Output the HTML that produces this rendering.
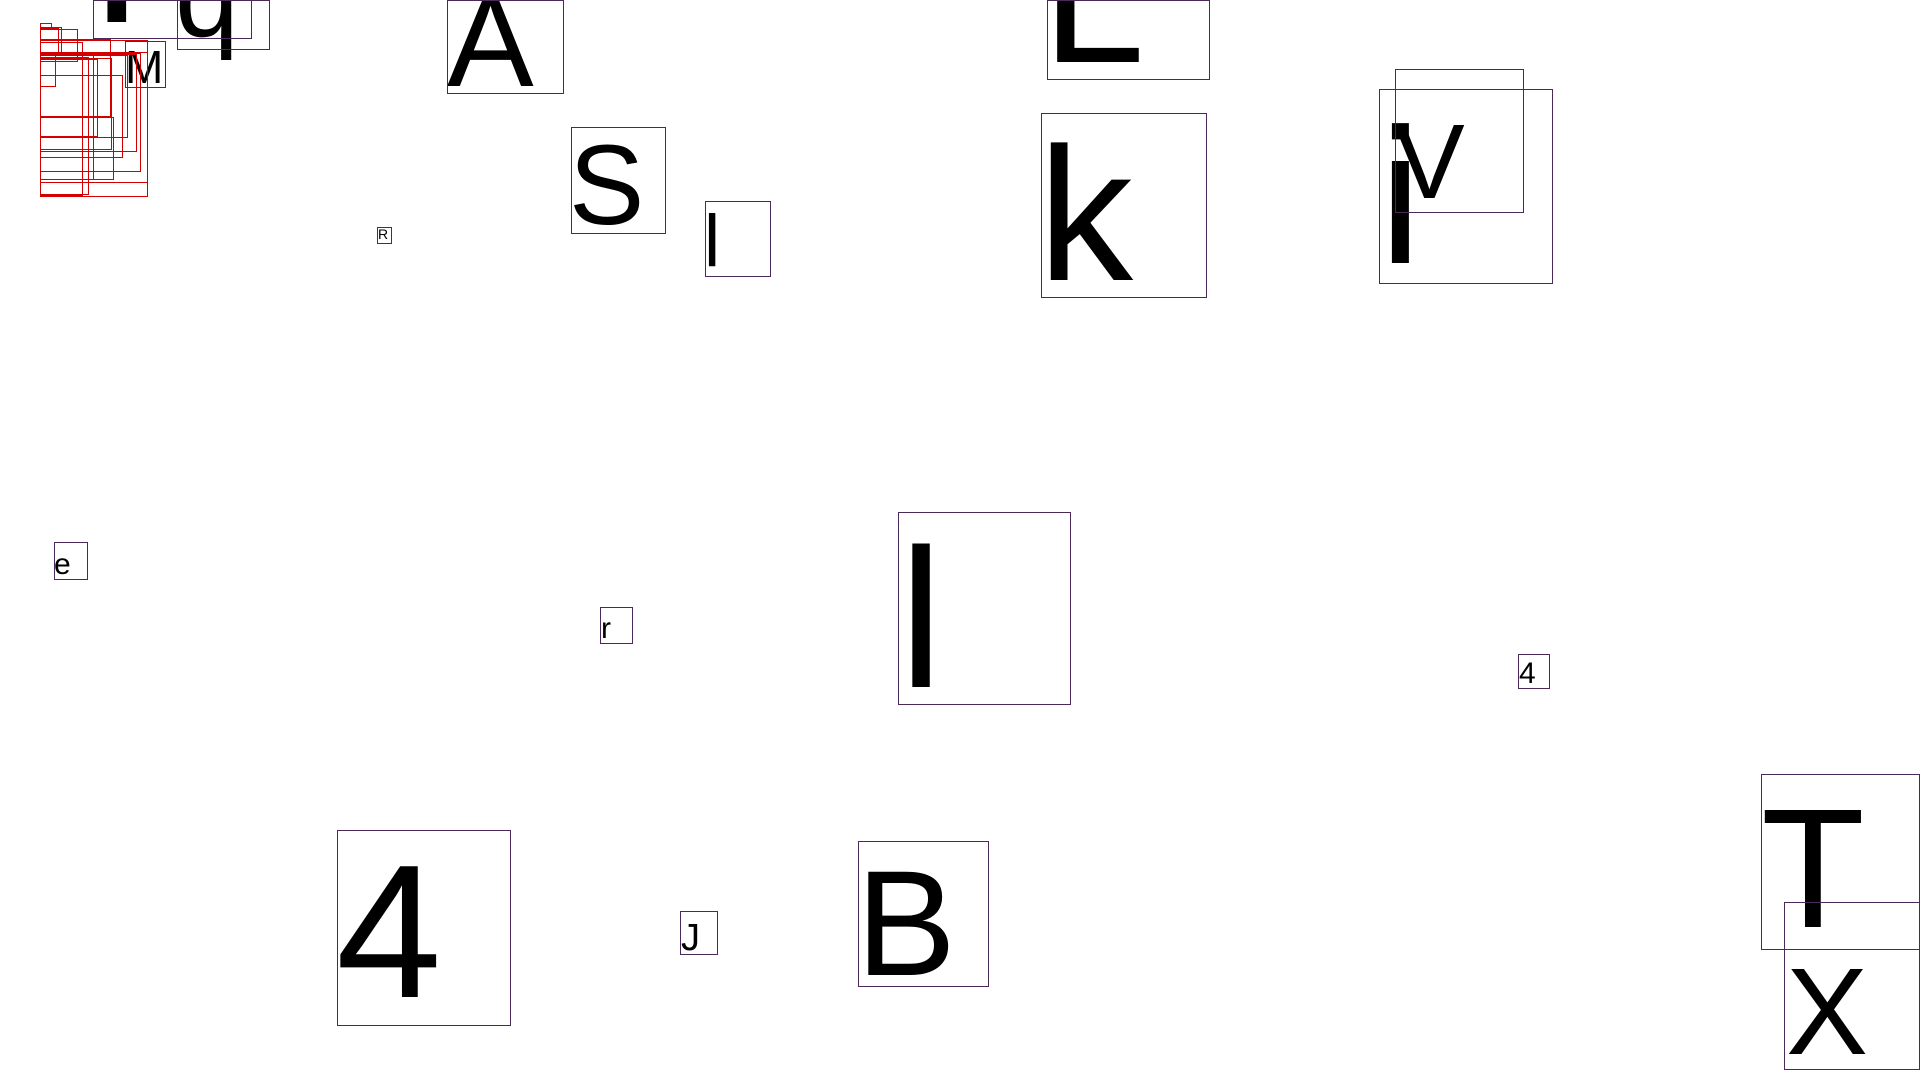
<!DOCTYPE html>
<html><head><meta charset="utf-8"><style>
html,body{margin:0;padding:0;background:#fff;width:1920px;height:1080px;overflow:hidden;position:relative;font-family:"Liberation Sans",Arial,sans-serif}
.b{position:absolute;border:1px solid #4b2a5a;box-sizing:border-box}
.r{position:absolute;border:1px solid #d40000;box-sizing:border-box}
.t{position:absolute;line-height:1;color:#000;white-space:nowrap}
</style></head><body>
<div class="t" style="left:89px;top:-146px;font-size:200px">I</div>
<div class="t" style="left:175px;top:-60px;font-size:115px">q</div>
<div class="t" style="left:125px;top:44px;font-size:46px">M</div>
<div class="t" style="left:447px;top:-24px;font-size:130px">A</div>
<div class="t" style="left:1042px;top:-93px;font-size:185px">L</div>
<div class="t" style="left:569px;top:129px;font-size:113px">S</div>
<div class="t" style="left:704px;top:205px;font-size:73px">l</div>
<div class="t" style="left:378px;top:227px;font-size:14px">R</div>
<div class="t" style="left:1038px;top:120px;font-size:190px">k</div>
<div class="t" style="left:1379px;top:100px;font-size:193px">i</div>
<div class="t" style="left:1394px;top:109px;font-size:106px">V</div>
<div class="t" style="left:54px;top:550px;font-size:30px">e</div>
<div class="t" style="left:601px;top:614px;font-size:30px">r</div>
<div class="t" style="left:899px;top:520px;font-size:198px">l</div>
<div class="t" style="left:1519px;top:659px;font-size:30px">4</div>
<div class="t" style="left:1761px;top:784px;font-size:170px">T</div>
<div class="t" style="left:1786px;top:951px;font-size:123px">X</div>
<div class="t" style="left:336px;top:837px;font-size:190px">4</div>
<div class="t" style="left:681px;top:919px;font-size:38px">J</div>
<div class="t" style="left:856px;top:848px;font-size:150px">B</div>

<div class="b" style="left:93px;top:0;width:159px;height:39px"></div>
<div class="b" style="left:177px;top:0;width:93px;height:50px"></div>
<div class="b" style="left:125px;top:41px;width:41px;height:47px"></div>
<div class="b" style="left:447px;top:0;width:117px;height:94px"></div>
<div class="b" style="left:1047px;top:0;width:163px;height:80px"></div>
<div class="b" style="left:571px;top:127px;width:95px;height:107px"></div>
<div class="b" style="left:705px;top:201px;width:66px;height:76px"></div>
<div class="b" style="left:377px;top:227px;width:15px;height:17px"></div>
<div class="b" style="left:1041px;top:113px;width:166px;height:185px"></div>
<div class="b" style="left:1395px;top:69px;width:129px;height:144px"></div>
<div class="b" style="left:1379px;top:89px;width:174px;height:195px"></div>
<div class="b" style="left:54px;top:542px;width:34px;height:38px"></div>
<div class="b" style="left:600px;top:607px;width:33px;height:37px"></div>
<div class="b" style="left:898px;top:512px;width:173px;height:193px"></div>
<div class="b" style="left:1518px;top:654px;width:32px;height:35px"></div>
<div class="b" style="left:1761px;top:774px;width:159px;height:176px"></div>
<div class="b" style="left:1784px;top:902px;width:136px;height:168px"></div>
<div class="b" style="left:337px;top:830px;width:174px;height:196px"></div>
<div class="b" style="left:680px;top:911px;width:38px;height:44px"></div>
<div class="b" style="left:858px;top:841px;width:131px;height:146px"></div>

<div class="r" style="left:40px;top:23px;width:12px;height:7px"></div>
<div class="r" style="left:40px;top:27px;width:22px;height:28px"></div>
<div class="r" style="left:40px;top:28px;width:19px;height:25px"></div>
<div class="r" style="left:40px;top:29px;width:38px;height:33px"></div>
<div class="r" style="left:40px;top:39px;width:71px;height:78px"></div>
<div class="r" style="left:40px;top:40px;width:108px;height:157px"></div>
<div class="r" style="left:40px;top:52px;width:108px;height:131px"></div>
<div class="r" style="left:40px;top:53px;width:101px;height:119px"></div>
<div class="r" style="left:40px;top:54px;width:97px;height:98px"></div>
<div class="r" style="left:40px;top:55px;width:88px;height:83px"></div>
<div class="r" style="left:40px;top:58px;width:72px;height:92px"></div>
<div class="r" style="left:40px;top:59px;width:58px;height:78px"></div>
<div class="r" style="left:40px;top:75px;width:83px;height:83px"></div>
<div class="r" style="left:40px;top:42px;width:43px;height:154px"></div>
<div class="r" style="left:40px;top:55px;width:54px;height:125px"></div>
<div class="r" style="left:40px;top:57px;width:49px;height:138px"></div>
<div class="r" style="left:40px;top:117px;width:74px;height:63px"></div>
<div class="r" style="left:40px;top:52px;width:16px;height:35px"></div>
</body></html>
